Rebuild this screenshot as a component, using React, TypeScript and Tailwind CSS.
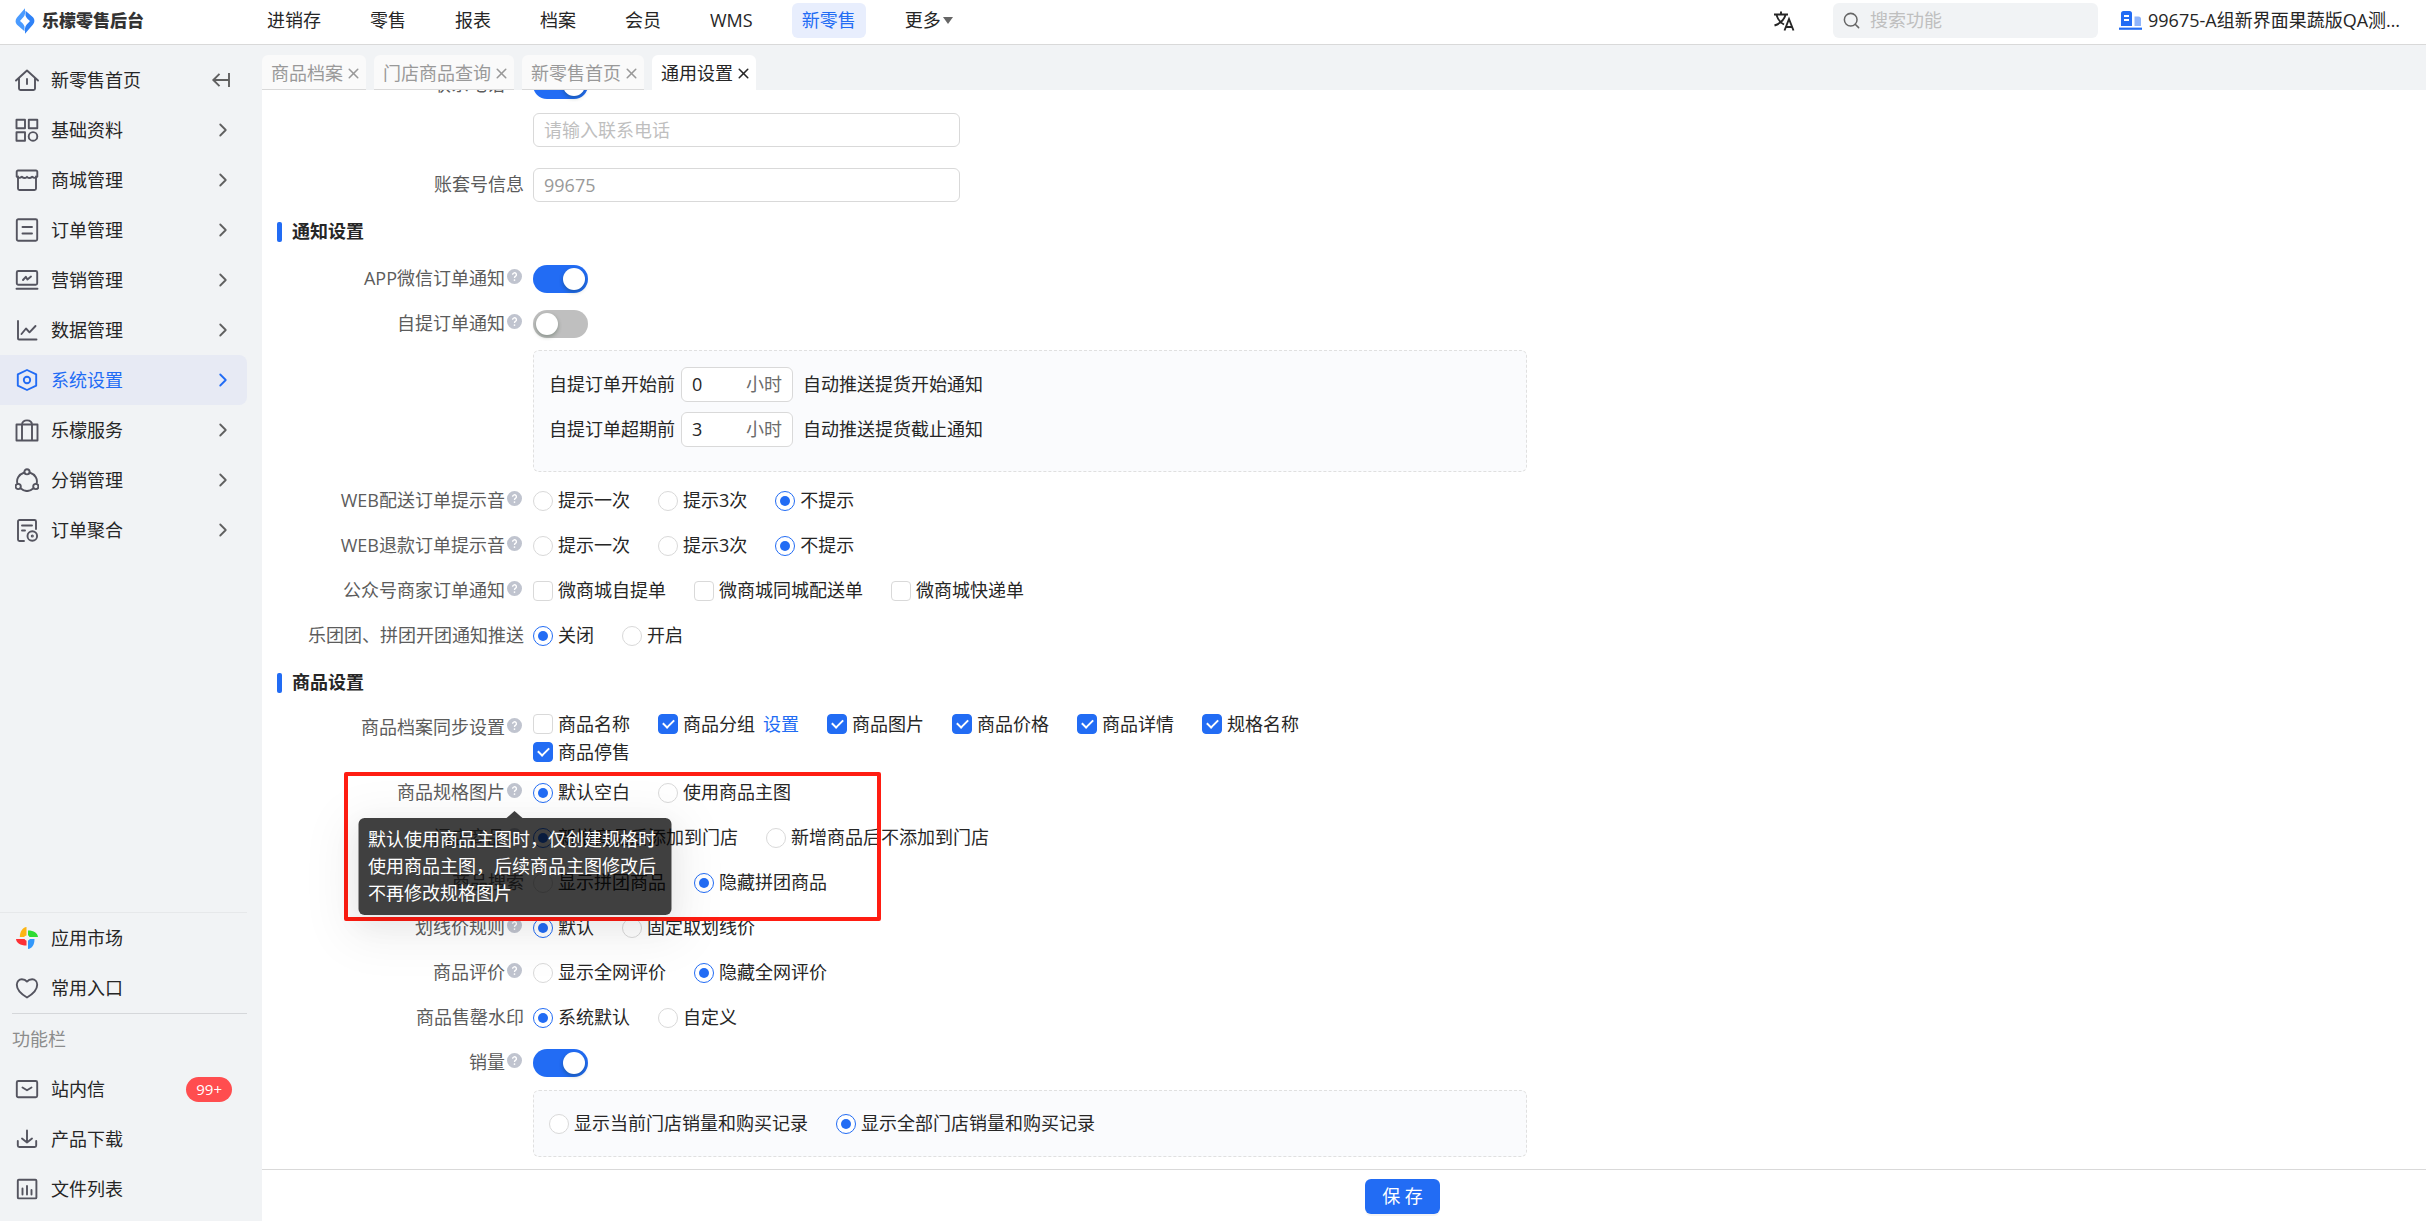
import { useId, type ReactNode } from 'react';
import { ChevronRight, Search, X } from 'lucide-react';

interface NavItem {
  label: string;
  icon: ReactNode;
}

interface Option {
  label: string;
  checked?: boolean;
  link?: string;
}

interface FieldProps {
  label?: string;
  htmlFor?: string;
  help?: ReactNode;
  alignTop?: boolean;
  children: ReactNode;
}

function Glyph({ children }: { children: ReactNode }) {
  return (
    <svg
      width={24}
      height={24}
      viewBox="0 0 24 24"
      fill="none"
      stroke="currentColor"
      strokeWidth={1.9}
      strokeLinecap="round"
      strokeLinejoin="round"
      className="shrink-0"
      aria-hidden="true"
    >
      {children}
    </svg>
  );
}

const mainNav: NavItem[] = [
  {
    label: '新零售首页',
    icon: (
      <Glyph>
        <path d="M1 12.500 12 2.500l11 10M4 10v10.500a1.500 1.500 0 0 0 1.500 1.500h13a1.500 1.500 0 0 0 1.500-1.500V10M12 11v5" />
      </Glyph>
    ),
  },
  {
    label: '基础资料',
    icon: (
      <Glyph>
        <rect x="1.500" y="1.800" width="8.500" height="8.500" />
        <rect x="13.800" y="1.800" width="8.500" height="8.500" />
        <rect x="1.500" y="14.200" width="8.500" height="8.500" />
        <circle cx="18" cy="18.400" r="4.300" />
      </Glyph>
    ),
  },
  {
    label: '商城管理',
    icon: (
      <Glyph>
        <path d="M3 8.500V20.500a1.500 1.500 0 0 0 1.500 1.500h15a1.500 1.500 0 0 0 1.500-1.500V8.500" />
        <path d="M1.700 3.800a1.300 1.300 0 0 1 1.300-1.300h18a1.300 1.300 0 0 1 1.300 1.300v4.700c-1 1.800-3.600 1.800-5.200.3-1.600 1.500-3.600 1.500-5.100 0-1.500 1.500-3.500 1.500-5.100 0-1.600 1.500-4.200 1.500-5.200-.3z" />
      </Glyph>
    ),
  },
  {
    label: '订单管理',
    icon: (
      <Glyph>
        <rect x="1.800" y="1.300" width="20.400" height="21.500" rx="1.500" />
        <path d="M7.500 9h9.500M7.500 15.500h9.500" />
      </Glyph>
    ),
  },
  {
    label: '营销管理',
    icon: (
      <Glyph>
        <rect x="1.800" y="3" width="20.400" height="13.800" rx="1.500" />
        <path d="m8 12 2.800-3.200 1.600 2.600L16 8.500M1.500 20.800h21" />
      </Glyph>
    ),
  },
  {
    label: '数据管理',
    icon: (
      <Glyph>
        <path d="M3 3v17.500a1 1 0 0 0 1 1h17.500M6.500 16l4.500-5.500 3.500 3.800L20.500 8" />
      </Glyph>
    ),
  },
  {
    label: '系统设置',
    icon: (
      <Glyph>
        <path d="m12 2 9.200 4.400v11.200L12 22l-9.200-4.400V6.400z" />
        <circle cx="12" cy="12" r="3.200" />
      </Glyph>
    ),
  },
  {
    label: '乐檬服务',
    icon: (
      <Glyph>
        <path d="M1.500 6.500h21V22.500h-21zM7 22.500V7c0-3 2.200-4.600 5-4.600s5 1.600 5 4.600v15.500" />
      </Glyph>
    ),
  },
  {
    label: '分销管理',
    icon: (
      <Glyph>
        <circle cx="12" cy="3.800" r="2.600" />
        <circle cx="3.200" cy="18.500" r="2.600" />
        <circle cx="20.800" cy="18.500" r="2.600" />
        <path d="M9.300 4.500C3.500 6.500 1 11.500 2.500 15.800M14.700 4.500c5.800 2 8.300 7 6.800 11.300M5.500 20.300c4 3.400 9 3.400 13 0" />
      </Glyph>
    ),
  },
  {
    label: '订单聚合',
    icon: (
      <Glyph>
        <path d="M9 23H4.500A1.500 1.500 0 0 1 3 21.500v-18A1.500 1.500 0 0 1 4.500 2h15A1.500 1.500 0 0 1 21 3.500V11M7 7.500h10M7 12.500h3" />
        <circle cx="17.300" cy="18" r="4.800" />
        <circle cx="17.300" cy="18" r=".6" />
      </Glyph>
    ),
  },
];

const shortcuts: NavItem[] = [
  {
    label: '应用市场',
    icon: (
      <svg width={24} height={24} viewBox="0 0 24 24" className="shrink-0" aria-hidden="true">
        <path d="M11.500 1v8.500a3.500 3.500 0 0 0-2.500 1.500H4.800C5 5.500 7.500 1.500 11.500 1z" fill="#fdb515" />
        <path d="M13 4.500c6 0 9.500 2.500 10 6.500h-8.500a3.500 3.500 0 0 0-1.500-1.800z" fill="#2fdc33" />
        <path d="M19.500 13c0 6-2.500 9.500-6.500 10v-8.500a3.500 3.500 0 0 0 1.800-1.500z" fill="#3398fb" />
        <path d="M11.500 19.500C5 19.500 1.500 17 1 13h8.500a3.500 3.500 0 0 0 2 1.800z" fill="#fd3036" />
      </svg>
    ),
  },
  {
    label: '常用入口',
    icon: (
      <Glyph>
        <path d="M12 21.500C6 18 1.800 14 1.800 8.800c0-3.200 2.200-5.600 5-5.600 2.200 0 4 .8 5.200 2.400 1.200-1.600 3-2.400 5.200-2.400 2.800 0 5 2.400 5 5.600C22.200 14 18 18 12 21.500z" />
      </Glyph>
    ),
  },
];

const tools: NavItem[] = [
  {
    label: '站内信',
    icon: (
      <Glyph>
        <rect x="1.800" y="4" width="20.400" height="16.200" rx="1.500" />
        <path d="m7.500 10.500 4.500 2.700 4.500-2.700" />
      </Glyph>
    ),
  },
  {
    label: '产品下载',
    icon: (
      <Glyph>
        <path d="M12 3.500v12M7 11.500l5 4 5-4M2.800 14v4.500A1.500 1.500 0 0 0 4.300 20h15.400a1.500 1.500 0 0 0 1.500-1.500V14" />
      </Glyph>
    ),
  },
  {
    label: '文件列表',
    icon: (
      <Glyph>
        <rect x="2.800" y="2.800" width="18.600" height="18.600" rx="1" />
        <path d="M7.500 11.500v6M12 9v8.500M16.500 13v4.500" />
      </Glyph>
    ),
  },
];

const topNav = ['进销存', '零售', '报表', '档案', '会员', 'WMS', '新零售'];
const tabs = ['商品档案', '门店商品查询', '新零售首页', '通用设置'];

function Logo() {
  return (
    <svg width={20} height={26} viewBox="0 0 20 26" aria-hidden="true">
      <path d="M10 .3v5.500C9.500 9 7 10.500 5 13c2 1.500 4 3.500 4.500 5.500v4.700L2 16.800c-2-2.300-1.800-5 0-7.300z" fill="#4a9bff" />
      <path d="M10 25.700v-5.500c.5-3.200 3-4.700 5-7.200-2-1.500-4-3.500-4.500-5.500V2.800L18 9.200c2 2.300 1.800 5 0 7.300z" fill="#2f82f7" />
    </svg>
  );
}

function HelpIcon() {
  return (
    <svg width={15} height={15} viewBox="0 0 14 14" fill="none" aria-hidden="true">
      <circle cx="7" cy="7" r="7" fill="#c0c4cf" />
      <path d="M5.200 5.400a1.800 1.800 0 1 1 2.700 1.500c-.6.300-.9.600-.9 1.400" stroke="#fff" strokeWidth="1.300" />
      <circle cx="7" cy="10.300" r=".8" fill="#fff" />
    </svg>
  );
}

function Tooltip({ children }: { children: ReactNode }) {
  return (
    <span
      role="tooltip"
      className="absolute top-full left-1/2 z-20 mt-5 w-[313px] -translate-x-1/2 rounded-md bg-black/75 px-[10px] py-2 text-left leading-[27px] text-white shadow-[0_12px_48px_16px_rgba(0,0,0,0.05),0_9px_28px_rgba(0,0,0,0.06)]"
    >
      <span className="absolute bottom-full left-1/2 -translate-x-1/2 border-x-8 border-b-[7px] border-x-transparent border-b-black/75" />
      {children}
    </span>
  );
}

function Field({ label, htmlFor, help, alignTop, children }: FieldProps) {
  return (
    <div className={`flex min-h-[45px] ${alignTop ? 'items-start' : 'items-center'}`}>
      <div
        className={`mr-[9px] flex w-[262px] shrink-0 items-center justify-end text-[#5c5c5c] ${alignTop ? 'pt-1' : ''}`}
      >
        {label && <label htmlFor={htmlFor}>{label}</label>}
        {help && (
          <span className="relative mx-[2px] mb-1">
            <HelpIcon />
            {help}
          </span>
        )}
      </div>
      {children}
    </div>
  );
}

function Toggle({ id, on = false }: { id: string; on?: boolean }) {
  return (
    <input
      id={id}
      type="checkbox"
      role="switch"
      defaultChecked={on}
      className="h-7 w-[55px] cursor-pointer appearance-none rounded-full bg-[#bfbfbf] p-[3px] before:block before:size-[22px] before:rounded-full before:bg-white before:shadow-[0_2px_4px_rgba(0,35,11,0.3)] checked:bg-[#226cf4] checked:before:ml-[27px]"
    />
  );
}

function RadioGroup({ options }: { options: Option[] }) {
  const name = useId();
  return (
    <div className="flex items-center gap-7" role="radiogroup">
      {options.map((option) => (
        <label key={option.label} className="flex cursor-pointer items-center gap-[5px] text-[#262626]">
          <input
            type="radio"
            name={name}
            defaultChecked={option.checked}
            className="grid size-5 cursor-pointer appearance-none place-items-center rounded-full border border-[#d9d9d9] bg-white before:size-[10px] before:rounded-full checked:border-[#226cf4] checked:before:bg-[#226cf4]"
          />
          {option.label}
        </label>
      ))}
    </div>
  );
}

function CheckboxGroup({ options }: { options: Option[] }) {
  return (
    <div className="flex max-w-[850px] flex-wrap gap-x-7">
      {options.map((option) => (
        <span key={option.label} className="flex h-7 items-center">
          <label className="flex cursor-pointer items-center gap-[5px] text-[#262626]">
            <input
              type="checkbox"
              defaultChecked={option.checked}
              className="grid size-5 cursor-pointer appearance-none place-items-center rounded border border-[#d9d9d9] bg-white before:mb-[3px] before:h-[11px] before:w-[7px] before:rotate-45 before:border-r-2 before:border-b-2 before:border-white checked:border-[#226cf4] checked:bg-[#226cf4]"
            />
            {option.label}
          </label>
          {option.link && (
            <a href="#" className="ml-2 text-[#226cf4]">
              {option.link}
            </a>
          )}
        </span>
      ))}
    </div>
  );
}

function SectionTitle({ children }: { children: ReactNode }) {
  return (
    <div className="flex h-[49px] items-center pl-[15px]">
      <span className="mr-[10px] h-5 w-[5px] rounded-xs bg-[#226cf4]" />
      <h2 className="font-bold text-[#262626]">{children}</h2>
    </div>
  );
}

function HoursInput({ before, after, value }: { before: string; after: string; value: string }) {
  return (
    <label className="flex items-center">
      {before}
      <span className="mx-[6px] flex h-[35px] w-28 items-center rounded-md border border-[#d9d9d9] bg-white px-[10px]">
        <input type="text" defaultValue={value} className="min-w-0 flex-1 outline-none" />
        <span className="text-[#6b6b6b]">小时</span>
      </span>
      <span className="ml-1">{after}</span>
    </label>
  );
}

function SideLink({ item, arrow, active, badge }: { item: NavItem; arrow?: boolean; active?: boolean; badge?: string }) {
  return (
    <a
      href="#"
      className={`flex h-[50px] items-center rounded-r-lg pr-[13px] pl-[15px] ${
        active ? 'bg-[#e7eaf4] text-[#226cf4]' : 'text-[#54545f]'
      }`}
    >
      {item.icon}
      <span className={`ml-3 flex-1 ${active ? '' : 'text-[#262626]'}`}>{item.label}</span>
      {arrow && <ChevronRight size={22} strokeWidth={2} className={active ? '' : 'text-[#606060]'} />}
      {badge && (
        <span className="mr-[2px] rounded-full bg-[#ff4d4f] px-[10px] text-[15px] leading-[25px] text-white">
          {badge}
        </span>
      )}
    </a>
  );
}

function Header() {
  return (
    <header className="flex h-[45px] shrink-0 items-center border-b border-[#d9d9d9] bg-white pb-[3px]">
      <div className="flex w-[257px] shrink-0 items-center pl-[15px]">
        <Logo />
        <span className="ml-[7px] text-[17px] font-black text-[#333]">乐檬零售后台</span>
      </div>
      <nav className="flex flex-1 items-center gap-[29px] text-[#262626]">
        {topNav.map((name) => (
          <a
            key={name}
            href="#"
            className={`rounded-md px-[10px] leading-[35px] ${name === '新零售' ? 'bg-[#e8eefd] text-[#226cf4]' : ''}`}
          >
            {name}
          </a>
        ))}
        <button type="button" className="flex items-center gap-[2px] px-[10px] leading-[35px]">
          更多
          <span className="border-x-[5px] border-t-[7px] border-x-transparent border-t-[#666]" />
        </button>
      </nav>
      <button type="button" aria-label="语言" className="mr-[38px]">
        <svg width={22} height={22} viewBox="0 0 22 22" fill="none" stroke="#262626" strokeWidth={1.9}>
          <path d="M1 4.500h14M8 1.500v3M3.500 5c1.500 5 4.500 8 7.500 9.500M12.500 5c-1.500 5-6 8.800-11 10.500M11.500 20.500l4.500-11.500 4.500 11.500M13 17h6" />
        </svg>
      </button>
      <label className="flex h-[35px] w-[265px] items-center rounded-md bg-[#f1f3f5] px-[9px]">
        <Search size={19} strokeWidth={1.9} className="text-[#666]" />
        <input
          type="text"
          aria-label="搜索功能"
          placeholder="搜索功能"
          className="ml-[9px] min-w-0 flex-1 outline-none placeholder:text-[#bfbfbf]"
        />
      </label>
      <button type="button" className="mr-5 ml-[21px] flex w-[287px] items-center gap-[6px] text-[#262626]">
        <svg width={23} height={19} viewBox="0 0 23 19" className="shrink-0" aria-hidden="true">
          <path d="M2 15V2.500A2.500 2.500 0 0 1 4.500 0h6A2.500 2.500 0 0 1 13 2.500V15z" fill="#226cf4" />
          <path d="M5 5h5M5 9h5" stroke="#fff" strokeWidth="1.800" />
          <path d="M15.500 5.500h4A2.500 2.500 0 0 1 22 8v7h-6.500z" fill="#8fb4fa" />
          <path d="M0 17.700h23" stroke="#226cf4" strokeWidth="2.200" />
        </svg>
        <span className="truncate">99675-A组新界面果蔬版QA测试账套</span>
      </button>
    </header>
  );
}

function Sidebar() {
  return (
    <aside className="flex w-[262px] shrink-0 flex-col pt-[10px] pr-[15px] pb-[7px]">
      <nav className="flex-1">
        {mainNav.map((item, i) =>
          i === 0 ? (
            <div key={item.label} className="flex items-center">
              <div className="flex-1">
                <SideLink item={item} />
              </div>
              <button type="button" aria-label="收起菜单" className="mr-4 text-[#606060]">
                <svg width={20} height={16} viewBox="0 0 20 16" fill="none" stroke="currentColor" strokeWidth={1.9}>
                  <path d="M18 1v14M18 8H2.500M8.500 1.800 2.300 8l6.200 6.200" />
                </svg>
              </button>
            </div>
          ) : (
            <SideLink key={item.label} item={item} arrow active={item.label === '系统设置'} />
          ),
        )}
      </nav>
      <div className="border-t border-[#e6e8ea]">
        {shortcuts.map((item) => (
          <SideLink key={item.label} item={item} />
        ))}
      </div>
      <div className="ml-3 border-t border-[#d5d7da] leading-[50px] text-[#8c8c8c]">功能栏</div>
      {tools.map((item) => (
        <SideLink key={item.label} item={item} badge={item.label === '站内信' ? '99+' : undefined} />
      ))}
    </aside>
  );
}

function TabBar() {
  return (
    <div className="flex h-[45px] shrink-0 items-end gap-2 bg-[#f1f3f5]">
      {tabs.map((tab) => {
        const active = tab === '通用设置';
        return (
          <div
            key={tab}
            className={`flex h-[35px] items-center gap-[2px] rounded-t-md border-b pt-[2px] pr-1 pl-[9px] ${
              active ? 'border-white bg-white text-[#262626]' : 'border-[#d9d9d9] bg-[#fafafa] text-[#999]'
            }`}
          >
            <button type="button">{tab}</button>
            <button type="button" aria-label={`关闭${tab}`}>
              <X size={17} strokeWidth={2.2} />
            </button>
          </div>
        );
      })}
    </div>
  );
}

const soundOptions: Option[] = [{ label: '提示一次' }, { label: '提示3次' }, { label: '不提示', checked: true }];

function SettingsForm() {
  return (
    <form className="-mt-7">
      <Field label="联系电话" htmlFor="phone-on" help=" ">
        <Toggle id="phone-on" on />
      </Field>
      <Field>
        <input
          type="text"
          aria-label="联系电话"
          placeholder="请输入联系电话"
          className="h-[34px] w-[427px] rounded-md border border-[#d9d9d9] px-[10px] outline-none placeholder:text-[#bfbfbf]"
        />
      </Field>
      <div className="mt-[10px]">
        <Field label="账套号信息" htmlFor="account">
          <input
            id="account"
            type="text"
            readOnly
            value="99675"
            className="h-[34px] w-[427px] rounded-md border border-[#d9d9d9] px-[10px] text-[#999] outline-none"
          />
        </Field>
      </div>

      <SectionTitle>通知设置</SectionTitle>
      <Field label="APP微信订单通知" htmlFor="app-notice" help=" ">
        <Toggle id="app-notice" on />
      </Field>
      <Field label="自提订单通知" htmlFor="pickup-notice" help=" ">
        <Toggle id="pickup-notice" />
      </Field>
      <div className="mt-1 mb-[6px] ml-[271px] flex w-[994px] flex-col gap-[10px] rounded-md border border-dashed border-[#e0e0e0] bg-[#fafbfd] px-[15px] pt-4 pb-6 text-[#262626]">
        <HoursInput before="自提订单开始前" after="自动推送提货开始通知" value="0" />
        <HoursInput before="自提订单超期前" after="自动推送提货截止通知" value="3" />
      </div>
      <Field label="WEB配送订单提示音" help=" ">
        <RadioGroup options={soundOptions} />
      </Field>
      <Field label="WEB退款订单提示音" help=" ">
        <RadioGroup options={soundOptions} />
      </Field>
      <Field label="公众号商家订单通知" help=" ">
        <CheckboxGroup options={[{ label: '微商城自提单' }, { label: '微商城同城配送单' }, { label: '微商城快递单' }]} />
      </Field>
      <Field label="乐团团、拼团开团通知推送">
        <RadioGroup options={[{ label: '关闭', checked: true }, { label: '开启' }]} />
      </Field>

      <SectionTitle>商品设置</SectionTitle>
      <div className="pt-[3px] pb-1">
        <Field label="商品档案同步设置" help=" " alignTop>
          <CheckboxGroup
            options={[
              { label: '商品名称' },
              { label: '商品分组', checked: true, link: '设置' },
              { label: '商品图片', checked: true },
              { label: '商品价格', checked: true },
              { label: '商品详情', checked: true },
              { label: '规格名称', checked: true },
              { label: '商品停售', checked: true },
            ]}
          />
        </Field>
      </div>
      <div className="relative">
        <Field
          label="商品规格图片"
          help={<Tooltip>默认使用商品主图时，仅创建规格时使用商品主图，后续商品主图修改后不再修改规格图片</Tooltip>}
        >
          <RadioGroup options={[{ label: '默认空白', checked: true }, { label: '使用商品主图' }]} />
        </Field>
        <div className="pointer-events-none absolute top-[2px] left-[82px] z-10 h-[149px] w-[537px] rounded-xs border-4 border-[#ff1d12]" />
      </div>
      <Field label="门店商品" help=" ">
        <RadioGroup options={[{ label: '新增商品后添加到门店', checked: true }, { label: '新增商品后不添加到门店' }]} />
      </Field>
      <Field label="商品搜索">
        <RadioGroup options={[{ label: '显示拼团商品' }, { label: '隐藏拼团商品', checked: true }]} />
      </Field>
      <Field label="划线价规则" help=" ">
        <RadioGroup options={[{ label: '默认', checked: true }, { label: '固定取划线价' }]} />
      </Field>
      <Field label="商品评价" help=" ">
        <RadioGroup options={[{ label: '显示全网评价' }, { label: '隐藏全网评价', checked: true }]} />
      </Field>
      <Field label="商品售罄水印">
        <RadioGroup options={[{ label: '系统默认', checked: true }, { label: '自定义' }]} />
      </Field>
      <Field label="销量" htmlFor="sales" help=" ">
        <Toggle id="sales" on />
      </Field>
      <div className="mt-[5px] mb-3 ml-[271px] flex h-[67px] w-[994px] items-center rounded-md border border-dashed border-[#e0e0e0] bg-[#fafbfd] px-[15px]">
        <RadioGroup
          options={[{ label: '显示当前门店销量和购买记录' }, { label: '显示全部门店销量和购买记录', checked: true }]}
        />
      </div>
    </form>
  );
}

export default function App() {
  return (
    <div className="flex h-screen flex-col bg-[#f1f3f5] font-['Open_Sans','Noto_Sans_CJK_SC',sans-serif] text-[18px] leading-[27px] whitespace-nowrap">
      <Header />
      <div className="flex min-h-0 flex-1">
        <Sidebar />
        <main className="flex min-w-0 flex-1 flex-col bg-white">
          <TabBar />
          <div className="min-h-0 flex-1 overflow-hidden whitespace-normal">
            <SettingsForm />
          </div>
          <footer className="flex h-[52px] shrink-0 items-start justify-center border-t border-[#d9d9d9] pt-[9px] pl-[117px]">
            <button
              type="button"
              className="h-[35px] w-[75px] rounded-md bg-[#226cf4] text-white shadow-[0_2px_0_rgba(0,0,0,0.045)]"
            >
              保 存
            </button>
          </footer>
        </main>
      </div>
    </div>
  );
}
